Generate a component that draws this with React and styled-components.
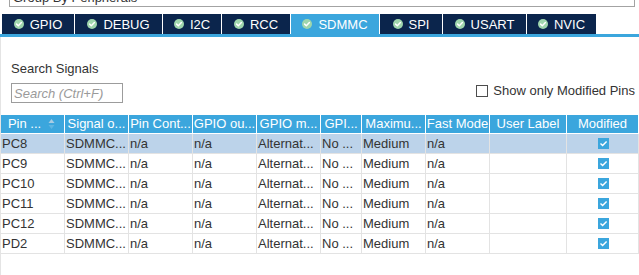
import React from 'react';
import styled, { createGlobalStyle } from 'styled-components';

const GlobalStyle = createGlobalStyle`
  html, body { margin: 0; padding: 0; background: #fff; }
  body { font-family: "Liberation Sans", Arial, sans-serif; }
  * { box-sizing: border-box; }
`;

const BLUE = '#3ba6dd';
const NAVY = '#0b254c';

const Page = styled.div`
  width: 639px;
  height: 275px;
  overflow: hidden;
  background: #fff;
`;

const GroupSelect = styled.div`
  margin: -13px 4px 0 9px;
  height: 20px;
  border: 1px solid #a3a3a3;
  font-size: 13px;
  color: #333;
  padding-left: 3px;
  display: flex;
  align-items: center;
`;

const TabBar = styled.div`
  margin-top: 7px;
  display: flex;
  gap: 1px;
  padding-left: 2px;
  border-bottom: 3px solid ${BLUE};
`;

const Tab = styled.div`
  width: ${(p) => p.$w}px;
  height: 20px;
  display: flex;
  align-items: center;
  justify-content: center;
  gap: 6px;
  background: ${(p) => (p.$active ? BLUE : NAVY)};
  color: #fff;
  font-size: 13px;
  white-space: nowrap;
`;

const Content = styled.div`
  border-left: 1px solid #e4e4e4;
  padding-top: 24px;
  height: 240px;
`;

const Toolbar = styled.div`
  display: flex;
  justify-content: space-between;
  align-items: flex-end;
  padding: 0 4px 0 10px;
`;

const SearchGroup = styled.div`
  display: flex;
  flex-direction: column;
`;

const Label = styled.div`
  font-size: 13px;
  line-height: 15px;
  color: #333;
`;

const SearchInput = styled.input`
  margin-top: 7px;
  width: 112px;
  height: 20px;
  border: 1px solid #9c9c9c;
  padding: 0 2px;
  font-family: "Liberation Sans", Arial, sans-serif;
  font-size: 13px;
  font-style: italic;
  color: #333;
  outline: none;
  &::placeholder { color: #9a9a9a; }
`;

const CheckRow = styled.label`
  display: flex;
  align-items: center;
  gap: 5px;
  padding-bottom: 5px;
  font-size: 13px;
  line-height: 15px;
  color: #333;
`;

const EmptyBox = styled.span`
  width: 12px;
  height: 12px;
  border: 1px solid #4d4d4d;
  background: #fff;
`;

const Table = styled.table`
  margin-top: 12px;
  width: 638px;
  table-layout: fixed;
  border-collapse: separate;
  border-spacing: 0;
  font-size: 13px;
`;

const Th = styled.th`
  background: ${BLUE};
  color: #fff;
  font-weight: normal;
  line-height: 18px;
  padding: 0;
  text-align: center;
  white-space: nowrap;
  overflow: hidden;
  border-right: 1px solid #fff;
  border-bottom: 1px solid #fff;
`;

const HeadInner = styled.div`
  display: flex;
  align-items: center;
`;

const HeadText = styled.span`
  flex: 1;
  text-align: center;
`;

const SortIcon = styled.svg`
  width: 7px;
  height: 12px;
  margin-right: 9px;
  flex: none;
`;

const Tr = styled.tr`
  background: ${(p) => (p.$selected ? '#bcd3ea' : '#fff')};
`;

const Td = styled.td`
  line-height: 19px;
  padding: 0 0 0 1px;
  color: #333;
  white-space: nowrap;
  overflow: hidden;
  border-right: 1px solid #e3e3e3;
  border-bottom: 1px solid #e3e3e3;
  text-align: ${(p) => (p.$center ? 'center' : 'left')};
`;

const CheckMark = styled.span`
  display: inline-flex;
  vertical-align: middle;
  width: 11px;
  height: 11px;
  background: ${BLUE};
  align-items: center;
  justify-content: center;
  margin-top: -2px;
`;

const TabIcon = () => (
  <svg width="10" height="10" viewBox="0 0 10 10">
    <circle cx="5" cy="5" r="5" fill="#9fd6ad" />
    <path d="M2.6 5.1 L4.3 6.7 L7.4 3.5" fill="none" stroke="#fff" strokeWidth="1.5" strokeLinecap="round" strokeLinejoin="round" />
  </svg>
);

const tabs = [
  { name: 'GPIO', w: 72 },
  { name: 'DEBUG', w: 87 },
  { name: 'I2C', w: 58 },
  { name: 'RCC', w: 68 },
  { name: 'SDMMC', w: 88, active: true },
  { name: 'SPI', w: 62 },
  { name: 'USART', w: 83 },
  { name: 'NVIC', w: 69 },
];

const cols = [64, 64, 64, 64, 64, 41, 64, 64, 77, 72];
const headers = ['Signal o...', 'Pin Cont...', 'GPIO ou...', 'GPIO m...', 'GPI...', 'Maximu...', 'Fast Mode', 'User Label', 'Modified'];
const pins = ['PC8', 'PC9', 'PC10', 'PC11', 'PC12', 'PD2'];

export default function App() {
  return (
    <Page>
      <GlobalStyle />
      <GroupSelect>Group By Peripherals</GroupSelect>
      <TabBar>
        {tabs.map((t) => (
          <Tab key={t.name} $w={t.w} $active={t.active}>
            <TabIcon />
            <span>{t.name}</span>
          </Tab>
        ))}
      </TabBar>
      <Content>
        <Toolbar>
          <SearchGroup>
            <Label>Search Signals</Label>
            <SearchInput placeholder="Search (Ctrl+F)" />
          </SearchGroup>
          <CheckRow>
            <EmptyBox />
            Show only Modified Pins
          </CheckRow>
        </Toolbar>
        <Table>
          <colgroup>
            {cols.map((w, i) => (
              <col key={i} style={{ width: w }} />
            ))}
          </colgroup>
          <thead>
            <tr>
              <Th>
                <HeadInner>
                  <HeadText>Pin ...</HeadText>
                  <SortIcon viewBox="0 0 7 12">
                    <path d="M3.5 1 L6.5 5 L0.5 5 Z" fill="#a9cde3" />
                    <path d="M3.5 11 L6.5 7 L0.5 7 Z" fill="#5eb6e3" />
                  </SortIcon>
                </HeadInner>
              </Th>
              {headers.map((h) => (
                <Th key={h}>{h}</Th>
              ))}
            </tr>
          </thead>
          <tbody>
            {pins.map((p, i) => (
              <Tr key={p} $selected={i === 0}>
                <Td>{p}</Td>
                <Td>SDMMC...</Td>
                <Td>n/a</Td>
                <Td>n/a</Td>
                <Td>Alternat...</Td>
                <Td>No ...</Td>
                <Td>Medium</Td>
                <Td>n/a</Td>
                <Td></Td>
                <Td $center>
                  <CheckMark>
                    <svg width="9" height="9" viewBox="0 0 9 9">
                      <path d="M1.5 4.6 L3.6 6.6 L7.6 2.4" fill="none" stroke="#fff" strokeWidth="1.4" />
                    </svg>
                  </CheckMark>
                </Td>
              </Tr>
            ))}
          </tbody>
        </Table>
      </Content>
    </Page>
  );
}
